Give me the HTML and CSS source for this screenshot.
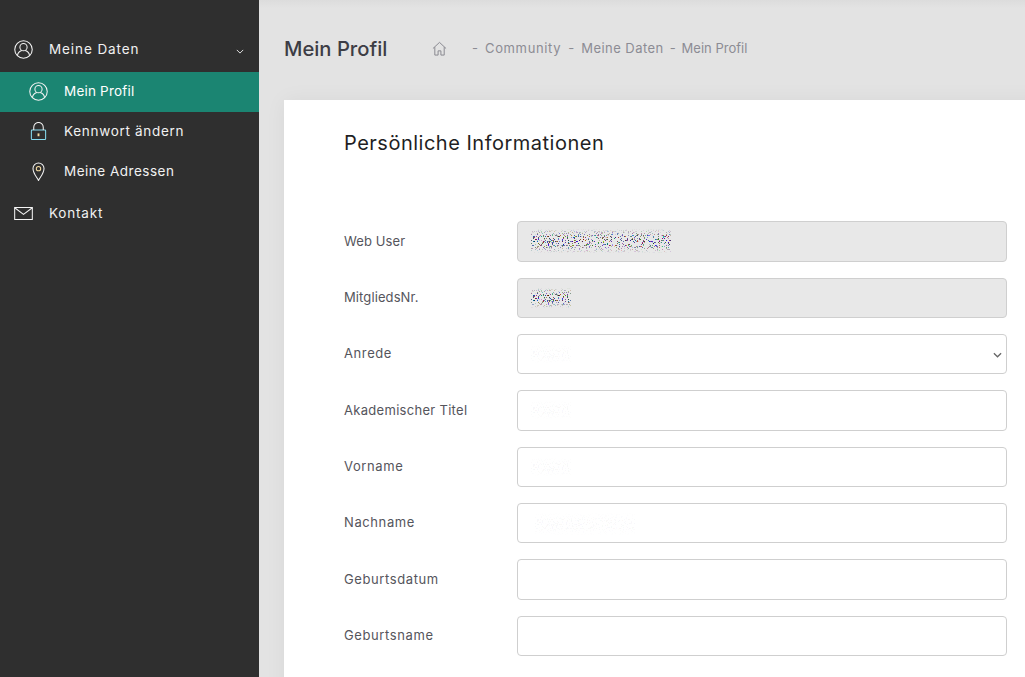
FILE: index.html
```html
<!DOCTYPE html>
<html lang="de">
<head>
<meta charset="utf-8">
<title>Mein Profil</title>
<link rel="stylesheet" href="styles.css">
</head>
<body>
<svg class="defs" width="0" height="0" aria-hidden="true">
  <filter id="speckle" x="0" y="0" width="100%" height="100%" color-interpolation-filters="sRGB">
    <feTurbulence type="fractalNoise" baseFrequency="0.8" numOctaves="3" seed="11"/>
    <feColorMatrix type="matrix" values="1.500 -.25 -.25 0 -.15  -.15 1.300 -.15 0 -.15  -.3 -.1 1.700 0 -.2  0 0 0 30 -17.500"/>
  </filter>
</svg>
<div class="app">
  <aside class="sidebar">
    <nav class="nav">
      <a class="nav-item nav-top sp-9">
        <svg class="ico" viewBox="0 0 20 20"><circle cx="10" cy="10" r="9.200"/><circle cx="10" cy="7.500" r="3.800"/><path d="M3.600 16.600c.4-3.200 2.600-5 4.600-5.500M16.400 16.600c-.4-3.200-2.600-5-4.600-5.500"/></svg>
        <span class="nav-label">Meine Daten</span>
        <svg class="chev" viewBox="0 0 10 6"><path d="M1 1l4 4 4-4"/></svg>
      </a>
      <a class="nav-item nav-sub active sp-2">
        <svg class="ico" viewBox="0 0 20 20"><circle cx="10" cy="10" r="9.200"/><circle cx="10" cy="7.500" r="3.800"/><path d="M3.600 16.600c.4-3.200 2.600-5 4.600-5.500M16.400 16.600c-.4-3.200-2.600-5-4.600-5.500"/></svg>
        <span class="nav-label">Mein Profil</span>
      </a>
      <a class="nav-item nav-sub sp-7">
        <svg class="ico" viewBox="0 0 20 20"><rect class="tint" x="2.500" y="8.500" width="15" height="10" rx=".8"/><path d="M5 8.500V5.500a5 5 0 0 1 10 0v3"/><path class="warm" d="M10 12v3" stroke-width="2"/></svg>
        <span class="nav-label">Kennwort ändern</span>
      </a>
      <a class="nav-item nav-sub sp-5">
        <svg class="ico" viewBox="0 0 20 20"><path d="M10 19.500C7.500 15 4.200 11.500 4.200 6.800a5.800 5.800 0 0 1 11.600 0c0 4.700-3.300 8.200-5.800 12.700z"/><circle class="warm" cx="10" cy="7" r="2.300"/></svg>
        <span class="nav-label">Meine Adressen</span>
      </a>
      <a class="nav-item nav-contact sp-8">
        <svg class="ico ico-mail" viewBox="0 0 20 14"><path d="M.5.500h19v13H.5z"/><path d="M.5.800L10 8 19.500.800"/></svg>
        <span class="nav-label">Kontakt</span>
      </a>
    </nav>
  </aside>
  <main class="main">
    <header class="pagehead">
      <h1 class="page-title">Mein Profil</h1>
      <ol class="crumbs">
        <li class="crumb-home"><svg class="home" viewBox="0 0 16 16"><path d="M1 8l7-6.500L15 8M3 6.500V15h3.500v-4.500h3V15H13V6.500"/></svg></li>
        <li>-</li><li class="crumb-wide">Community</li>
        <li>-</li><li class="crumb-mid">Meine Daten</li>
        <li class="crumb-close">-</li><li class="crumb-close">Mein Profil</li>
      </ol>
    </header>
    <section class="card">
      <h2 class="card-title">Persönliche Informationen</h2>
      <form class="form">
        <div class="row">
          <label class="label label-tight">Web User</label>
          <div class="field"><input class="control" disabled>
            <svg class="noise noise-long" viewBox="0 0 140 24"><rect width="140" height="24" filter="url(#speckle)"/></svg></div>
        </div>
        <div class="row">
          <label class="label label-tight">MitgliedsNr.</label>
          <div class="field"><input class="control" disabled>
            <svg class="noise noise-short" viewBox="0 0 40 20"><rect width="40" height="20" filter="url(#speckle)"/></svg></div>
        </div>
        <div class="row">
          <label class="label">Anrede</label>
          <div class="field"><select class="control"><option></option></select>
            <svg class="select-chev" viewBox="0 0 10 6"><path d="M1 1l4 4 4-4"/></svg>
            <svg class="noise noise-short faint" viewBox="0 0 40 20"><rect width="40" height="20" filter="url(#speckle)"/></svg></div>
        </div>
        <div class="row">
          <label class="label label-mid">Akademischer Titel</label>
          <div class="field"><input class="control">
            <svg class="noise noise-short faint" viewBox="0 0 40 20"><rect width="40" height="20" filter="url(#speckle)"/></svg></div>
        </div>
        <div class="row">
          <label class="label">Vorname</label>
          <div class="field"><input class="control">
            <svg class="noise noise-short faint" viewBox="0 0 40 20"><rect width="40" height="20" filter="url(#speckle)"/></svg></div>
        </div>
        <div class="row">
          <label class="label">Nachname</label>
          <div class="field"><input class="control">
            <svg class="noise noise-name faint" viewBox="0 0 100 24"><rect width="100" height="24" filter="url(#speckle)"/></svg></div>
        </div>
        <div class="row">
          <label class="label">Geburtsdatum</label>
          <div class="field"><input class="control"></div>
        </div>
        <div class="row">
          <label class="label">Geburtsname</label>
          <div class="field"><input class="control"></div>
        </div>
      </form>
    </section>
  </main>
</div>
</body>
</html>
```
FILE: styles.css
```css
* { box-sizing: border-box; }
html, body { margin: 0; height: 100%; overflow: hidden; }
body { font-family: "Inter", "Liberation Sans", sans-serif; color: #333; }
.defs { display: block; height: 0; }
.app { display: flex; height: 677px; width: 1025px; overflow: hidden; }

.sidebar { width: 259px; flex: none; background: #2f2f2f; padding-top: 28px; }
.nav { display: flex; flex-direction: column; }
.nav-item { display: flex; align-items: center; color: #f1f1f1; font-size: 13.500px; }
.nav-top { height: 44px; padding: 0 15px 2px 14px; }
.nav-sub { height: 40px; padding: 0 0 2px 29px; }
.nav-contact { height: 42px; padding-left: 14px; }
.nav-item.active { background: #1b8572; color: #fff; }
.sp-2 { letter-spacing: .2px; }
.sp-5 { letter-spacing: .5px; }
.sp-7 { letter-spacing: .7px; }
.sp-8 { letter-spacing: .8px; }
.sp-9 { letter-spacing: .9px; }
.ico { width: 19px; height: 19px; flex: none; fill: none; stroke: #f4f4f4; stroke-width: 1.100; margin-right: 16px; }
.ico-mail { height: 13px; }
.tint { stroke: #86dcf0; }
.warm { stroke: #f2d9a0; }
.nav-label { flex: 1; }
.chev { width: 8px; height: 5px; margin-top: 4px; fill: none; stroke: #e6e6e6; stroke-width: 1.200; }

.main { flex: 1; min-width: 0; background: linear-gradient(#dcdcdc, #e3e3e3 8px); padding-left: 25px; }
.pagehead { height: 100px; display: flex; align-items: center; padding-bottom: 4px; }
.page-title { margin: 0; width: 148px; font-size: 20.200px; font-weight: 500; color: #3d3d45; white-space: nowrap; }
.crumbs { display: flex; align-items: center; margin: 0; padding: 0; list-style: none; gap: 7px; font-size: 13px; color: #8c8c94; white-space: nowrap; }
.crumb-home { display: flex; margin-right: 18px; }
.crumb-wide { letter-spacing: .65px; }
.crumb-mid { letter-spacing: .45px; }
.crumb-close { margin-left: -1px; }
.home { width: 15px; height: 15px; fill: none; stroke: #85858d; stroke-width: 1; }

.card { width: 760px; height: 700px; background: #fff; box-shadow: 0 0 20px rgba(0,0,0,.05); padding: 30px 0 0 60px; }
.card-title { margin: 0; height: 91.450px; font-size: 20px; font-weight: 400; letter-spacing: .5px; color: #1f1f24; line-height: 26px; }
.form { display: flex; flex-direction: column; gap: 16px; }
.row { display: flex; align-items: center; height: 40.300px; }
.label { width: 173px; flex: none; font-size: 13px; letter-spacing: .6px; color: #55555c; padding-bottom: 1.500px; }
.label-tight { letter-spacing: .1px; }
.label-mid { letter-spacing: .3px; }
.field { position: relative; width: 490px; height: 100%; }
.control { display: block; width: 100%; height: 100%; border: 1px solid #cfcfcf; border-radius: 4px; background: #fff; font: inherit; color: #555; padding: 0 12px; appearance: none; }
.control:disabled { background: #e8e8e8; }
.select-chev { position: absolute; right: 5px; top: 18px; width: 9px; height: 6px; fill: none; stroke: #666; stroke-width: 1.400; pointer-events: none; }
.noise { position: absolute; left: 14px; top: 8px; -webkit-mask-image: linear-gradient(transparent, #000 35%, #000 65%, transparent); mask-image: linear-gradient(transparent, #000 35%, #000 65%, transparent); }
.noise-long { width: 140px; height: 24px; }
.noise-short { width: 40px; height: 20px; top: 10px; }
.noise-name { width: 100px; height: 24px; top: 9px; left: 18px; }
.faint { opacity: .03; }
```
